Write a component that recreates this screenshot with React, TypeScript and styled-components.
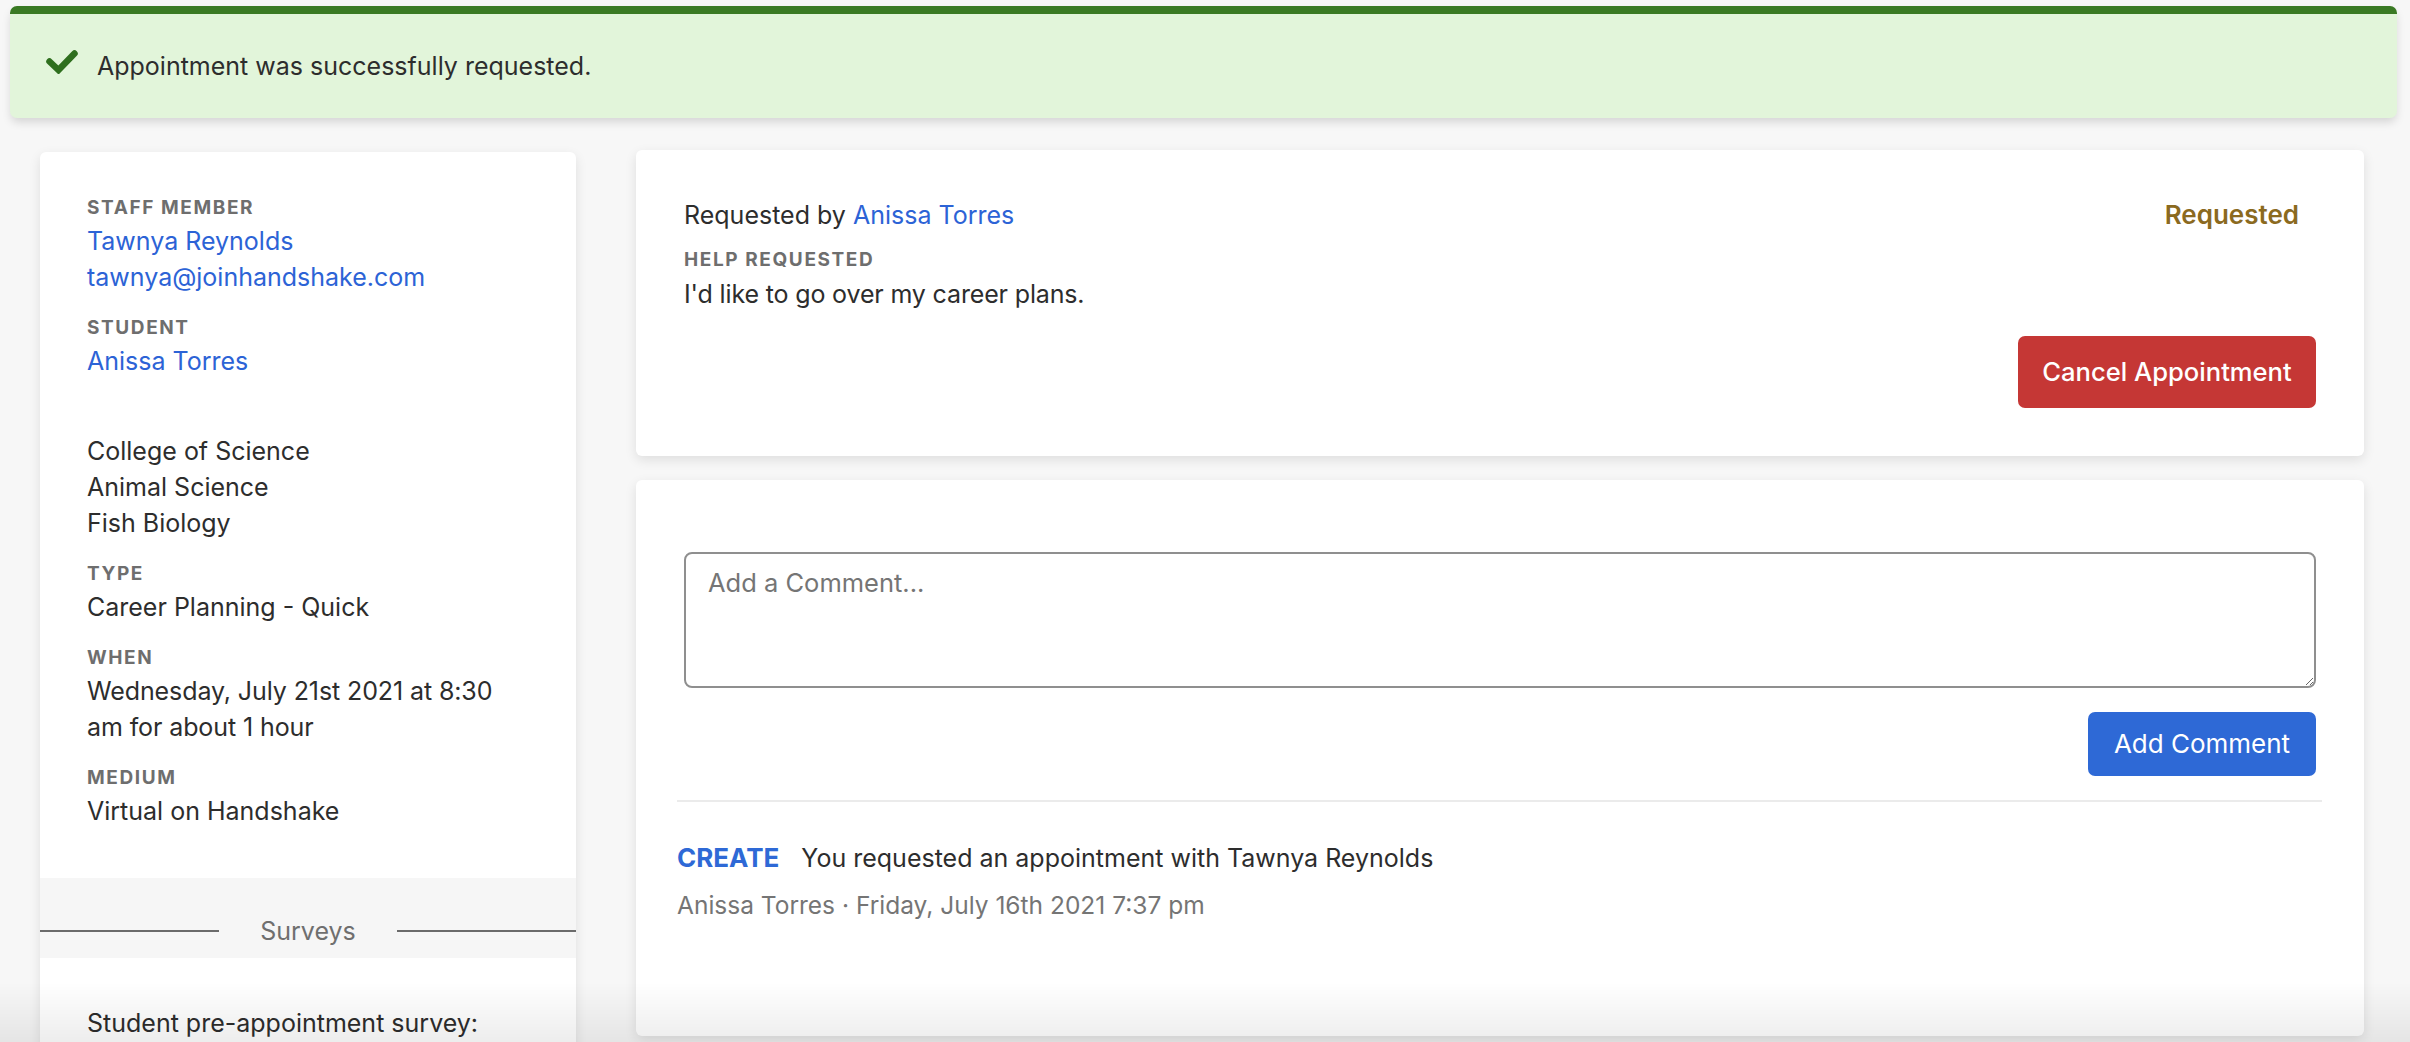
import styled, { createGlobalStyle } from 'styled-components';

const GlobalStyle = createGlobalStyle`
  html, body {
    margin: 0;
    height: 1042px;
    overflow: hidden;
    background: #f7f7f7;
    font-family: Inter, "Liberation Sans", sans-serif;
    color: #2d2d2d;
  }
  * { box-sizing: border-box; }
`;

const Page = styled.div`
  padding-top: 6px;
`;

const Banner = styled.div`
  display: flex;
  align-items: center;
  gap: 19px;
  height: 112px;
  margin: 0 13px 0 10px;
  padding-left: 36px;
  background: #e2f5da;
  border-top: 8px solid #3a7a24;
  border-radius: 7px;
  box-shadow: 0 5px 10px -1px rgba(0, 0, 0, 0.14);
  font-size: 25px;
`;

const CheckIcon = styled.svg`
  width: 32px;
  height: 24px;
  margin-bottom: 8px;
  flex: none;
`;

const Columns = styled.div`
  display: grid;
  grid-template-columns: 536px 1728px;
  column-gap: 60px;
  margin-left: 40px;
  padding-top: 32px;
  align-items: start;
`;

const Card = styled.section`
  background: #fff;
  border-radius: 6px;
  box-shadow: 0 4px 12px rgba(0, 0, 0, 0.1);
  font-size: 25px;
  line-height: 36px;
`;

const SideCard = styled(Card)`
  margin-top: 2px;
  padding-top: 44px;
`;

const SideBody = styled.div`
  padding: 0 47px 49px;
`;

const Field = styled.div<{ $gap?: number }>`
  margin-top: ${(p) => p.$gap ?? 21}px;
  &:first-child {
    margin-top: 0;
  }
`;

const Label = styled.div`
  margin-bottom: 3px;
  font-size: 19px;
  line-height: 24px;
  font-weight: 700;
  letter-spacing: 1.6px;
  color: #6e6e6e;
`;

const Value = styled.div``;

const WhenValue = styled(Value)`
  letter-spacing: -0.1px;
`;

const HelpText = styled(Value)`
  margin-top: 4px;
  letter-spacing: -0.15px;
`;

const TextLink = styled.a`
  display: block;
  color: #2c63d6;
  text-decoration: none;
`;

const InlineLink = styled(TextLink)`
  display: inline;
`;

const SurveyBand = styled.div`
  display: flex;
  align-items: center;
  gap: 41px;
  padding: 35px 0 9px;
  background: #f6f6f6;
  color: #6f6f6f;
`;

const SurveyLine = styled.span`
  flex: 1;
  height: 2px;
  background: #6b6b6b;
`;

const SurveyBody = styled.div`
  padding: 47px 47px 0;
  height: 120px;
`;

const Stack = styled.div`
  display: flex;
  flex-direction: column;
  gap: 24px;
`;

const RequestCard = styled(Card)`
  padding: 47px 48px 48px;
`;

const RequestRow = styled.div`
  display: flex;
  justify-content: space-between;
  margin-bottom: 15px;
`;

const Status = styled.span`
  margin-right: 17px;
  font-size: 26px;
  font-weight: 600;
  color: #8b6a1f;
`;

const Actions = styled.div<{ $gap: number }>`
  display: flex;
  justify-content: flex-end;
  margin-top: ${(p) => p.$gap}px;
`;

const Button = styled.button<{ $bg: string; $width: number; $height: number; $weight: number; $size: number }>`
  width: ${(p) => p.$width}px;
  height: ${(p) => p.$height}px;
  padding: 0 0 2px;
  border: none;
  border-radius: 7px;
  background: ${(p) => p.$bg};
  color: #fff;
  font-family: Inter, "Liberation Sans", sans-serif;
  font-size: ${(p) => p.$size}px;
  font-weight: ${(p) => p.$weight};
`;

const CommentCard = styled(Card)`
  height: 556px;
  padding: 72px 48px 0;
`;

const CommentBox = styled.textarea`
  display: block;
  width: 100%;
  height: 136px;
  padding: 11px 22px;
  border: 2px solid #8f8f8f;
  border-radius: 8px;
  background: #fff;
  color: #2d2d2d;
  font: 25.5px/36px Inter, "Liberation Sans", sans-serif;
  &::placeholder {
    color: #757575;
    opacity: 1;
  }
`;

const Divider = styled.hr`
  height: 2px;
  margin: 24px -6px 38px -7px;
  border: none;
  background: #ebebeb;
`;

const LogLine = styled.div`
  display: flex;
  gap: 22px;
  margin: 0 0 11px -7px;
`;

const LogAction = styled.span`
  font-size: 26px;
  font-weight: 700;
  color: #2e69d6;
`;

const LogMeta = styled.div`
  margin-left: -7px;
  font-size: 24.5px;
  color: #757575;
`;

const BottomFade = styled.div`
  position: fixed;
  left: 0;
  right: 0;
  bottom: 0;
  height: 60px;
  background: linear-gradient(to bottom, rgba(0, 0, 0, 0), rgba(0, 0, 0, 0.07));
  pointer-events: none;
`;

export default function App() {
  return (
    <Page>
      <GlobalStyle />
      <Banner>
        <CheckIcon viewBox="0 0 32 24" fill="none">
          <path d="M3.5 11.5 L12.5 20 L28.5 3.5" stroke="#2f6f1e" strokeWidth="6.5" strokeLinecap="round" strokeLinejoin="miter" />
        </CheckIcon>
        <span>Appointment was successfully requested.</span>
      </Banner>
      <Columns>
        <SideCard>
          <SideBody>
            <Field>
              <Label>STAFF MEMBER</Label>
              <TextLink>Tawnya Reynolds</TextLink>
              <TextLink>tawnya@joinhandshake.com</TextLink>
            </Field>
            <Field>
              <Label>STUDENT</Label>
              <TextLink>Anissa Torres</TextLink>
            </Field>
            <Field $gap={54}>
              <Value>College of Science</Value>
              <Value>Animal Science</Value>
              <Value>Fish Biology</Value>
            </Field>
            <Field>
              <Label>TYPE</Label>
              <Value>Career Planning - Quick</Value>
            </Field>
            <Field>
              <Label>WHEN</Label>
              <WhenValue>Wednesday, July 21st 2021 at 8:30 am for about 1 hour</WhenValue>
            </Field>
            <Field>
              <Label>MEDIUM</Label>
              <Value>Virtual on Handshake</Value>
            </Field>
          </SideBody>
          <SurveyBand>
            <SurveyLine />
            <span>Surveys</span>
            <SurveyLine />
          </SurveyBand>
          <SurveyBody>Student pre-appointment survey:</SurveyBody>
        </SideCard>
        <Stack>
          <RequestCard>
            <RequestRow>
              <span>
                Requested by <InlineLink>Anissa Torres</InlineLink>
              </span>
              <Status>Requested</Status>
            </RequestRow>
            <Label>HELP REQUESTED</Label>
            <HelpText>I'd like to go over my career plans.</HelpText>
            <Actions $gap={24}>
              <Button $bg="#c53735" $width={298} $height={72} $size={25.6} $weight={500}>Cancel Appointment</Button>
            </Actions>
          </RequestCard>
          <CommentCard>
            <CommentBox placeholder="Add a Comment..." />
            <Actions $gap={24}>
              <Button $bg="#2e69d6" $width={228} $height={64} $size={26} $weight={400}>Add Comment</Button>
            </Actions>
            <Divider />
            <LogLine>
              <LogAction>CREATE</LogAction>
              <span>You requested an appointment with Tawnya Reynolds</span>
            </LogLine>
            <LogMeta>Anissa Torres · Friday, July 16th 2021 7:37 pm</LogMeta>
          </CommentCard>
        </Stack>
      </Columns>
      <BottomFade />
    </Page>
  );
}
